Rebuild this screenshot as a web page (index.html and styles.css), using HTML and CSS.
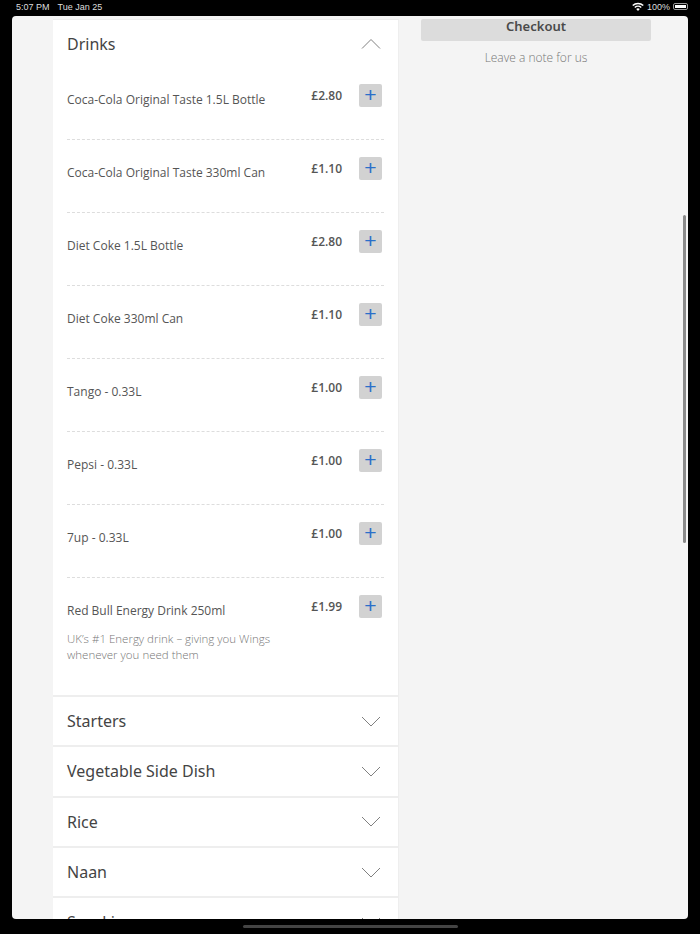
FILE: index.html
```html
<!DOCTYPE html>
<html lang="en">
<head>
  <meta charset="UTF-8" />
  <meta name="viewport" content="width=device-width, initial-scale=1.0" />
  <title>Menu</title>
  <link rel="stylesheet" href="styles.css">
</head>
<body>
  <!-- Status bar -->
  <div class="status-bar">
    <div class="status-left"><span>5:07 PM</span><span>Tue Jan 25</span></div>
    <div class="status-right">
      <svg class="wifi" width="12" height="9" viewBox="0 0 12 9"><path d="M6 9 4.2 7a2.6 2.6 0 0 1 3.6 0zM3.3 6 2.3 5a5.4 5.4 0 0 1 7.4 0l-1 1a4 4 0 0 0-5.4 0zM1.3 4 .2 3a8.4 8.4 0 0 1 11.6 0l-1.100 1a6.900 6.900 0 0 0-9.400 0z" fill="#fff"/></svg>
      <span>100%</span>
      <span class="battery"><span class="battery-fill"></span></span>
    </div>
  </div>

  <div class="frame">
    <div class="page">
      <div class="menu">
        <div class="section section-open">
          <h2>Drinks</h2>
          <svg class="chevron" width="20" height="11" viewBox="0 0 20 11"><path d="M1 10.500 10 1.500l9 9" /></svg>
        </div>
        <div class="item"><div class="item-name">Coca-Cola Original Taste 1.5L Bottle</div><div class="price">£2.80</div><div class="add">+</div></div>
        <div class="item"><div class="item-name">Coca-Cola Original Taste 330ml Can</div><div class="price">£1.10</div><div class="add">+</div></div>
        <div class="item"><div class="item-name">Diet Coke 1.5L Bottle</div><div class="price">£2.80</div><div class="add">+</div></div>
        <div class="item"><div class="item-name">Diet Coke 330ml Can</div><div class="price">£1.10</div><div class="add">+</div></div>
        <div class="item"><div class="item-name">Tango - 0.33L</div><div class="price">£1.00</div><div class="add">+</div></div>
        <div class="item"><div class="item-name">Pepsi - 0.33L</div><div class="price">£1.00</div><div class="add">+</div></div>
        <div class="item"><div class="item-name">7up - 0.33L</div><div class="price">£1.00</div><div class="add">+</div></div>
        <div class="item item-long">
          <div class="item-text">
            <div class="item-name">Red Bull Energy Drink 250ml</div>
            <p class="item-desc">UK’s #1 Energy drink – giving you Wings whenever you need them</p>
          </div>
          <div class="price">£1.99</div><div class="add">+</div>
        </div>
        <div class="section"><h2>Starters</h2><svg class="chevron" width="20" height="11" viewBox="0 0 20 11"><path d="M1 1 10 10l9-9" /></svg></div>
        <div class="section"><h2>Vegetable Side Dish</h2><svg class="chevron" width="20" height="11" viewBox="0 0 20 11"><path d="M1 1 10 10l9-9" /></svg></div>
        <div class="section"><h2>Rice</h2><svg class="chevron" width="20" height="11" viewBox="0 0 20 11"><path d="M1 1 10 10l9-9" /></svg></div>
        <div class="section"><h2>Naan</h2><svg class="chevron" width="20" height="11" viewBox="0 0 20 11"><path d="M1 1 10 10l9-9" /></svg></div>
        <div class="section"><h2>Snacking</h2><svg class="chevron" width="20" height="11" viewBox="0 0 20 11"><path d="M1 1 10 10l9-9" /></svg></div>
      </div>
      <aside class="side">
        <button class="checkout">Checkout</button>
        <div class="note">Leave a note for us</div>
      </aside>
    </div>
    <div class="scrollbar"></div>
  </div>

  <div class="home-area"><div class="home-bar"></div></div>
</body>
</html>
```
FILE: styles.css
```css
/* Shell */
html, body {
  margin: 0;
  height: 934px;
  overflow: hidden;
}
body {
  background: #000;
  font-family: "Open Sans", sans-serif;
  color: #4a4a4a;
  display: flex;
  flex-direction: column;
}
/* Status bar */
.status-bar {
  height: 16px;
  padding: 0 12px 3px 16px;
  box-sizing: border-box;
  display: flex;
  align-items: center;
  justify-content: space-between;
  color: #ddd;
  font: 9px "Liberation Sans", sans-serif;
}
.status-left {
  display: flex;
  gap: 8px;
}
.status-right {
  display: flex;
  align-items: center;
  gap: 3px;
}
.battery {
  width: 15px;
  height: 7px;
  padding: 1px;
  border: 1px solid #999;
  border-radius: 2px;
  box-sizing: border-box;
  display: flex;
}
.battery-fill {
  flex: 1;
  background: #fff;
}
/* App frame */
.frame {
  position: relative;
  margin: 0 12px;
  height: 903px;
  background: #f4f4f4;
  border-radius: 4px;
  overflow: hidden;
}
.page {
  display: flex;
  align-items: flex-start;
  padding: 3px 0 0 41px;
}
.menu {
  width: 346px;
  flex-shrink: 0;
  background: #fff;
  border-top: 1px solid #ececec;
  border-right: 1px solid #eee;
  box-sizing: border-box;
}
.section {
  height: 50.300px;
  box-sizing: border-box;
  border-top: 2px solid #eee;
  padding: 0 17px 0 14px;
  display: flex;
  align-items: center;
  justify-content: space-between;
}
.section-open {
  border-top: none;
  height: 47px;
}
.section h2 {
  margin: 0;
  font: 400 16px "Noto Sans", sans-serif;
  color: #444;
}
.chevron {
  fill: none;
  stroke: #808080;
  stroke-width: 1;
}
/* Menu items */
.item {
  height: 73px;
  margin: 0 14px;
  padding-top: 17px;
  box-sizing: border-box;
  border-bottom: 1px dashed #ddd;
  display: flex;
  align-items: flex-start;
}
.item-long {
  height: 118px;
  margin-bottom: -1px;
}
.item-name {
  flex: 1;
  padding-top: 8px;
  font-size: 12px;
  line-height: 16px;
  color: #555;
}
.item-text {
  flex: 1;
}
.item-desc {
  margin: 12px 0 0;
  max-width: 225px;
  font-size: 11.500px;
  font-weight: 300;
  line-height: 16px;
  color: #777;
}
.price {
  padding-top: 3px;
  font-size: 12px;
  font-weight: 600;
  line-height: 18px;
  color: #555;
}
.add {
  width: 23px;
  height: 23px;
  margin: 0 2px 0 17px;
  background: #d2d2d2;
  border-radius: 2px;
  color: #2a6fc9;
  font: 400 21px/22px "Liberation Sans", sans-serif;
  text-align: center;
}
/* Right column */
.side {
  width: 230px;
  margin-left: 22px;
  text-align: center;
}
.checkout {
  display: block;
  width: 100%;
  height: 22px;
  padding: 0 0 7px;
  border: none;
  border-radius: 2px;
  background: #dcdcdc;
  color: #4a4a4a;
  font: 600 13px/15px "Noto Sans", sans-serif;
  overflow: hidden;
}
.note {
  margin-top: 9px;
  font-size: 12px;
  font-weight: 300;
  line-height: 16px;
  color: #777;
}
.scrollbar {
  position: absolute;
  right: 2px;
  top: 199px;
  width: 3px;
  height: 328px;
  background: #8a8a8a;
  border-radius: 2px;
}
/* Home indicator */
.home-area {
  flex: 1;
  display: flex;
  justify-content: center;
  padding-top: 6px;
}
.home-bar {
  width: 215px;
  height: 3px;
  background: #444;
  border-radius: 2px;
}
```
